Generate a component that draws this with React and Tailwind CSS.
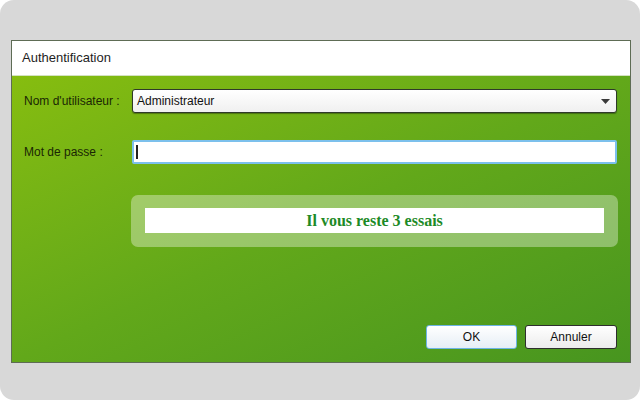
import React, { useState } from "react";

function App() {
  const [user] = useState("Administrateur");
  const [password, setPassword] = useState("");

  return (
    <div className="w-[640px] h-[400px] bg-white font-['Liberation_Sans',Arial,sans-serif]">
      <div className="h-full rounded-[14px] bg-[#d8d8d8] pt-[40px] pl-[11px] pr-[9px] pb-[37px]">
        <div className="h-full flex flex-col border border-[#5e6c55]">
          {/* title bar */}
          <div className="h-[35px] bg-white border-b border-[#d4e2c0] flex items-center px-[10px] text-[13px] text-[#1e1e1e]">
            Authentification
          </div>

          {/* body */}
          <div className="flex-1 flex flex-col bg-gradient-to-br from-[#86bd0f] via-[#62a81a] to-[#47951f] pt-[13px] pl-[12px] pr-[13px] pb-[13px]">
            <div className="flex items-center h-[24px]">
              <label className="w-[108px] text-[12px] text-[#1a2604]">
                Nom d'utilisateur :
              </label>
              <div className="flex-1 h-[24px] flex items-center justify-between rounded-[3px] border border-[#2f3a2a] bg-gradient-to-b from-white to-[#f0f0f0] shadow-[0_1px_1px_rgba(0,0,0,0.35)] pl-[4px] pr-[6px]">
                <span className="text-[12px] text-[#111]">{user}</span>
                <svg width="9" height="5" viewBox="0 0 9 5">
                  <path d="M0 0 H9 L4.5 5 Z" fill="#3a3a3a" />
                </svg>
              </div>
            </div>

            <div className="flex items-center h-[24px] mt-[27px]">
              <label className="w-[108px] text-[12px] text-[#1a2604]">
                Mot de passe :
              </label>
              <div className="flex-1 h-[24px] flex items-center rounded-[2px] border-2 border-[#7cc0ec] bg-white pl-[2px]">
                <div className="w-[2px] h-[14px] bg-[#222]" />
                <input
                  type="password"
                  value={password}
                  onChange={(e) => setPassword(e.target.value)}
                  className="flex-1 outline-none bg-transparent text-[12px]"
                />
              </div>
            </div>

            <div className="ml-[107px] mr-[-1px] mt-[31px] rounded-[7px] bg-white/35 pt-[13px] pb-[14px] px-[14px]">
              <div className="h-[25px] bg-white flex items-center justify-center text-[16px] font-bold text-[#1d8a26] font-['Liberation_Serif',serif]">
                Il vous reste 3 essais
              </div>
            </div>

            <div className="flex-1" />

            <div className="flex justify-end gap-[8px]">
              <button className="w-[91px] h-[24px] rounded-[3px] border border-[#6cb4e4] bg-gradient-to-b from-white to-[#e6eef6] text-[12px] text-[#111]">
                OK
              </button>
              <button className="w-[92px] h-[24px] rounded-[3px] border border-[#2e2e2e] bg-gradient-to-b from-white to-[#ececec] text-[12px] text-[#111]">
                Annuler
              </button>
            </div>
          </div>
        </div>
      </div>
    </div>
  );
}

export default App;
